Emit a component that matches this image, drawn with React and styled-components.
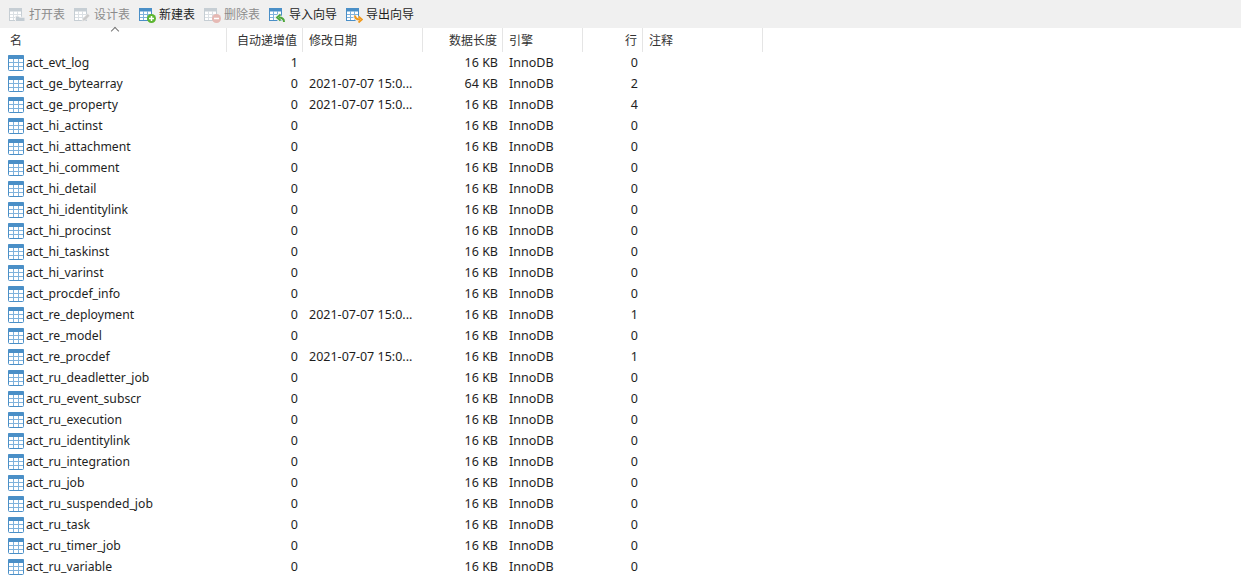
import React from "react";
import styled, { createGlobalStyle } from "styled-components";

const GlobalStyle = createGlobalStyle`
  html, body {
    margin: 0;
    background: #fff;
    overflow: hidden;
  }
  body {
    font-family: "Noto Sans", "Noto Sans CJK SC", sans-serif;
    font-size: 12.5px;
    color: #1e1e1e;
  }
`;

const columns = "7px 220px 76px 120px 80px 80px 60px 120px";

const rows = [
  ["act_evt_log", "1", "", "16 KB", "0"],
  ["act_ge_bytearray", "0", "2021-07-07 15:0...", "64 KB", "2"],
  ["act_ge_property", "0", "2021-07-07 15:0...", "16 KB", "4"],
  ["act_hi_actinst", "0", "", "16 KB", "0"],
  ["act_hi_attachment", "0", "", "16 KB", "0"],
  ["act_hi_comment", "0", "", "16 KB", "0"],
  ["act_hi_detail", "0", "", "16 KB", "0"],
  ["act_hi_identitylink", "0", "", "16 KB", "0"],
  ["act_hi_procinst", "0", "", "16 KB", "0"],
  ["act_hi_taskinst", "0", "", "16 KB", "0"],
  ["act_hi_varinst", "0", "", "16 KB", "0"],
  ["act_procdef_info", "0", "", "16 KB", "0"],
  ["act_re_deployment", "0", "2021-07-07 15:0...", "16 KB", "1"],
  ["act_re_model", "0", "", "16 KB", "0"],
  ["act_re_procdef", "0", "2021-07-07 15:0...", "16 KB", "1"],
  ["act_ru_deadletter_job", "0", "", "16 KB", "0"],
  ["act_ru_event_subscr", "0", "", "16 KB", "0"],
  ["act_ru_execution", "0", "", "16 KB", "0"],
  ["act_ru_identitylink", "0", "", "16 KB", "0"],
  ["act_ru_integration", "0", "", "16 KB", "0"],
  ["act_ru_job", "0", "", "16 KB", "0"],
  ["act_ru_suspended_job", "0", "", "16 KB", "0"],
  ["act_ru_task", "0", "", "16 KB", "0"],
  ["act_ru_timer_job", "0", "", "16 KB", "0"],
  ["act_ru_variable", "0", "", "16 KB", "0"],
];

const tools = [
  { label: "打开表", kind: "open", off: true },
  { label: "设计表", kind: "design", off: true },
  { label: "新建表", kind: "add" },
  { label: "删除表", kind: "remove", off: true },
  { label: "导入向导", kind: "import" },
  { label: "导出向导", kind: "export" },
];

function TableIcon() {
  const color = "#4a8fc7";
  return (
    <svg width="16" height="16" viewBox="0 0 16 16">
      <rect x="0.500" y="0.500" width="15" height="15" rx="1" fill="#fff" stroke={color} />
      <rect x="0" y="0" width="16" height="4" rx="1" fill={color} />
      <path d="M5.500 4v11M10.500 4v11M1 7.500h14M1 11.500h14" stroke="#7fb2dc" fill="none" />
    </svg>
  );
}

function Badge({ kind }) {
  if (kind === "add") {
    return (
      <g>
        <circle cx="12.500" cy="12.500" r="4.500" fill="#5cb531" />
        <path d="M10 12.500h5M12.500 10v5" stroke="#fff" strokeWidth="1.500" />
      </g>
    );
  }
  if (kind === "remove") {
    return (
      <g>
        <circle cx="12.500" cy="12.500" r="4.500" fill="#e6b9b4" />
        <path d="M10 12.500h5" stroke="#fff" strokeWidth="1.500" />
      </g>
    );
  }
  if (kind === "import") {
    return (
      <g fill="none">
        <path d="M15 16c0-3-2-4.500-5-4.500M11.500 8.500L8 11.500l3.500 3" stroke="#f0f0f0" strokeWidth="4" />
        <path d="M15 16c0-3-2-4.500-5-4.500" stroke="#4fa83d" strokeWidth="2" />
        <path d="M11.500 8.500L8 11.500l3.500 3" stroke="#4fa83d" strokeWidth="1.800" />
      </g>
    );
  }
  if (kind === "export") {
    return (
      <g fill="none">
        <path d="M9 9.500c0 3 1.500 4 5 4M12.500 10.500l3.500 3-3.500 3" stroke="#f0f0f0" strokeWidth="4" />
        <path d="M9 9.500c0 3 1.500 4 5 4" stroke="#f0991c" strokeWidth="2" />
        <path d="M12.500 10.500l3.500 3-3.500 3" stroke="#f0991c" strokeWidth="1.800" />
      </g>
    );
  }
  if (kind === "open") {
    return <path d="M6.500 10h3l1 1.200h5.500v4.300H6.500z" fill="#c3ccd3" stroke="#f0f0f0" />;
  }
  return <path d="M8 15.500l.8-3 5-5 2.200 2.200-5 5z" fill="#cbcbcb" stroke="#f0f0f0" strokeWidth="0.700" />;
}

function ToolIcon({ kind, off }) {
  const color = off ? "#c6ced4" : "#4a8fc7";
  const line = off ? "#dbe0e4" : "#7fb2dc";
  return (
    <svg width="17" height="17" viewBox="0 0 17 17">
      <rect x="0.500" y="2.500" width="12" height="12" fill="#fff" stroke={color} />
      <rect x="0" y="2" width="13" height="3.500" fill={color} />
      <path d="M4.500 5v9M8.500 5v9M1 8.500h11M1 11.500h11" stroke={line} fill="none" />
      <Badge kind={kind} />
    </svg>
  );
}

export default function App() {
  return (
    <Page>
      <GlobalStyle />
      <Toolbar>
        {tools.map((tool) => (
          <Tool key={tool.label} $off={tool.off}>
            <ToolIcon kind={tool.kind} off={tool.off} />
            {tool.label}
          </Tool>
        ))}
      </Toolbar>
      <Header>
        <span />
        <HeadCell $first>
          名<SortArrow />
        </HeadCell>
        <HeadCell $right>自动递增值</HeadCell>
        <HeadCell>修改日期</HeadCell>
        <HeadCell $right>数据长度</HeadCell>
        <HeadCell>引擎</HeadCell>
        <HeadCell $right>行</HeadCell>
        <HeadCell>注释</HeadCell>
      </Header>
      {rows.map(([name, auto, date, size, count]) => (
        <Row key={name}>
          <span />
          <NameCell>
            <TableIcon />
            {name}
          </NameCell>
          <Cell $right>{auto}</Cell>
          <Cell>{date}</Cell>
          <Cell $right>{size}</Cell>
          <Cell>InnoDB</Cell>
          <Cell $right>{count}</Cell>
          <Cell />
        </Row>
      ))}
    </Page>
  );
}

const Page = styled.div`
  width: 1241px;
  height: 585px;
  overflow: hidden;
  background: #fff;
`;

const Toolbar = styled.div`
  height: 28px;
  background: #f0f0f0;
  display: flex;
  align-items: center;
  padding-left: 9px;
  gap: 9px;
`;

const Tool = styled.div`
  display: flex;
  align-items: center;
  gap: 3px;
  font-size: 12px;
  color: ${(p) => (p.$off ? "#8c8c8c" : "#1e1e1e")};
`;

const Header = styled.div`
  position: relative;
  height: 24px;
  display: grid;
  grid-template-columns: ${columns};
  color: #333;
`;

const HeadCell = styled.div`
  display: flex;
  align-items: center;
  justify-content: ${(p) => (p.$right ? "flex-end" : "flex-start")};
  padding: 0 5px 0 ${(p) => (p.$first ? "3px" : "6px")};
  border-right: 1px solid #e5e5e5;
  font-size: 12px;
  box-sizing: border-box;
`;

const SortArrow = styled.i`
  position: absolute;
  left: 112px;
  top: 0;
  width: 5px;
  height: 5px;
  border-left: 1px solid #777;
  border-top: 1px solid #777;
  transform: rotate(45deg);
`;

const Row = styled.div`
  height: 21px;
  display: grid;
  grid-template-columns: ${columns};
  align-items: center;
`;

const Cell = styled.div`
  padding: 0 5px 0 6px;
  text-align: ${(p) => (p.$right ? "right" : "left")};
  white-space: nowrap;
  overflow: hidden;
`;

const NameCell = styled.div`
  display: flex;
  align-items: center;
  gap: 2px;
  padding-left: 1px;
  font-size: 12.2px;
  white-space: nowrap;
`;
